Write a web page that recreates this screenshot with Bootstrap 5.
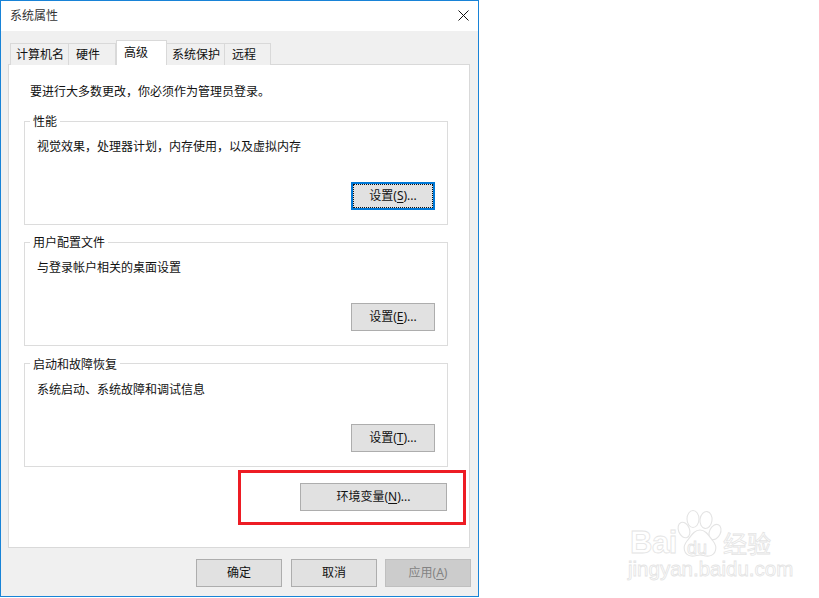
<!DOCTYPE html>
<html lang="zh">
<head>
<meta charset="utf-8">
<title>系统属性</title>
<link rel="stylesheet" href="https://cdn.jsdelivr.net/npm/bootstrap@5.3.0/dist/css/bootstrap.min.css">
<style>
html,body{height:100%;}
body{background:#fff;font:12px/16px "Noto Sans","Noto Sans CJK SC",sans-serif;color:#111;position:relative;overflow:hidden;}
.dlg{width:479px;height:597px;border:1px solid #1883d7;background:#f0f0f0;}
.dlg-title{height:30px;background:#fff;padding:0 9px;color:#333;}
.dlg-close{width:11px;height:11px;display:block;margin-right:0;margin-top:-1px;}
.dlg-body{padding:9px 8px 0 7px;}
.dlg-tabs{padding-left:2px;border:0;height:24px;align-items:flex-end;position:relative;z-index:1;}
.dlg-tabs .nav-link{height:22px;padding:3px 0 0;text-align:left;margin:0 0 -1px;border:1px solid #d9d9d9;border-bottom:0;border-left-width:0;border-radius:0;background:#f0f0f0;color:#111;font-size:12px;line-height:16px;}
.dlg-tabs .nav-item:first-child .nav-link{border-left-width:1px;}
.dlg-tabs .tab-a{width:59px;padding-left:5px;}
.dlg-tabs .tab-b{width:47px;padding-left:7px;}
.dlg-tabs .tab-d{width:58px;padding-left:5px;}
.dlg-tabs .tab-e{width:46px;padding-left:7px;}
.dlg-tabs .nav-link.active{width:51px;height:25px;padding:4px 0 0 7px;background:#fff;color:#111;border-color:#d9d9d9;border-left-width:1px;position:relative;z-index:2;}
.dlg-panel{height:484px;background:#fff;border:1px solid #d9d9d9;padding:18px 21px 0 15px;position:relative;}
.dlg-intro{padding-left:6px;height:29px;margin-top:1px;}
.grp{border:1px solid #dcdcdc;height:112px;margin:0 0 9px;padding:0 12px 14px 12px;display:flex;flex-direction:column;}
.grp legend{float:none;width:auto;font-size:12px;line-height:16px;margin:0 0 0 -7px;padding:0 3px;color:#111;transform:translateY(1px);}
.grp-text{margin-top:10px;flex:1;}
.win-btn{width:84px;height:28px;padding:0;background:#e1e1e1;border:1px solid #adadad;border-radius:0;color:#111;font-size:12px;line-height:16px;}
.win-btn:hover{background:#e1e1e1;border-color:#adadad;color:#111;}
.win-btn u{text-underline-offset:2px;}
.win-btn-focus{border:2px solid #0078d7;outline:1px dotted #111;outline-offset:-3px;}
.win-btn-focus:hover{border-color:#0078d7;}
.grp-last{margin-bottom:0;}
.grp-last legend{transform:translateY(2px);}
.grp-last .grp-text{margin-top:11px;}
.env-row{margin-top:16px;padding-right:1px;}
.env-btn{width:147px;}
.dlg-foot{margin-top:11px;margin-right:-1px;}
.foot-btn{width:86px;}
.foot-gap{margin-right:9px;}
.foot-gap2{margin-right:8px;}
.foot-btn.disabled,.foot-btn:disabled{background:#ccc;border-color:#bfbfbf;color:#838383;opacity:1;}
.red-mark{position:absolute;left:229px;top:405px;width:228px;height:55px;border:3px solid #ed1c24;pointer-events:none;}
.wm{position:absolute;left:628px;top:508px;width:150px;height:76px;color:#fff;}
.wm-bai,.wm-du,.wm-jy,.wm-url{position:absolute;-webkit-text-stroke:.8px #e4e4e4;font-family:"Liberation Sans",sans-serif;white-space:nowrap;}
.wm-bai{left:2px;top:17px;font-size:31px;letter-spacing:-.5px;line-height:36px;font-weight:700;}
.wm-du{left:59px;top:31px;font-size:18px;line-height:18px;z-index:1;}
.wm-jy{left:95px;top:21px;font-size:24px;line-height:28px;font-family:"Noto Sans CJK SC",sans-serif;}
.wm-url{left:0;top:49px;font-size:20.5px;line-height:24px;}
.wm-paw{position:absolute;left:49px;top:1px;}
</style>
</head>
<body>
<div class="dlg d-flex flex-column">
  <div class="dlg-title d-flex align-items-center justify-content-between">
    <span>系统属性</span>
    <svg class="dlg-close" viewBox="0 0 11 11"><path d="M.5.5l10 10M10.500.5l-10 10" stroke="#111" stroke-width="1" fill="none"/></svg>
  </div>
  <div class="dlg-body">
    <ul class="nav nav-tabs dlg-tabs">
      <li class="nav-item"><a class="nav-link tab-a" href="#">计算机名</a></li>
      <li class="nav-item"><a class="nav-link tab-b" href="#">硬件</a></li>
      <li class="nav-item"><a class="nav-link active" href="#">高级</a></li>
      <li class="nav-item"><a class="nav-link tab-d" href="#">系统保护</a></li>
      <li class="nav-item"><a class="nav-link tab-e" href="#">远程</a></li>
    </ul>
    <div class="dlg-panel">
      <div class="dlg-intro">要进行大多数更改，你必须作为管理员登录。</div>
      <fieldset class="grp">
        <legend>性能</legend>
        <div class="grp-text">视觉效果，处理器计划，内存使用，以及虚拟内存</div>
        <div class="d-flex justify-content-end"><button type="button" class="btn win-btn win-btn-focus">设置(<u>S</u>)...</button></div>
      </fieldset>
      <fieldset class="grp">
        <legend>用户配置文件</legend>
        <div class="grp-text">与登录帐户相关的桌面设置</div>
        <div class="d-flex justify-content-end"><button type="button" class="btn win-btn">设置(<u>E</u>)...</button></div>
      </fieldset>
      <fieldset class="grp grp-last">
        <legend>启动和故障恢复</legend>
        <div class="grp-text">系统启动、系统故障和调试信息</div>
        <div class="d-flex justify-content-end"><button type="button" class="btn win-btn">设置(<u>T</u>)...</button></div>
      </fieldset>
      <div class="env-row d-flex justify-content-end"><button type="button" class="btn win-btn env-btn">环境变量(<u>N</u>)...</button></div>
      <div class="red-mark"></div>
    </div>
    <div class="dlg-foot d-flex justify-content-end">
      <button type="button" class="btn win-btn foot-btn foot-gap">确定</button>
      <button type="button" class="btn win-btn foot-btn foot-gap2">取消</button>
      <button type="button" class="btn win-btn foot-btn" disabled>应用(<u>A</u>)</button>
    </div>
  </div>
</div>
<div class="wm">
  <svg class="wm-paw" width="46" height="52" viewBox="0 0 46 52" fill="#fff" stroke="#e4e4e4" stroke-width="1.1">
    <ellipse cx="16" cy="10" rx="6" ry="8.500"/>
    <ellipse cx="29" cy="11" rx="6" ry="8.500" transform="rotate(8 29 11)"/>
    <ellipse cx="7" cy="21" rx="5.500" ry="8" transform="rotate(-22 7 21)"/>
    <ellipse cx="38" cy="23" rx="5.500" ry="8" transform="rotate(25 38 23)"/>
    <path d="M23 21c6 0 9 6 13 11 5 6 3 14-4 15-4 .6-6-1-9-1s-5 1.600-9 1c-7-1-9-9-4-15 4-5 7-11 13-11z"/>
  </svg>
  <span class="wm-bai">Bai</span>
  <span class="wm-du">du</span>
  <span class="wm-jy">经验</span>
  <span class="wm-url">jingyan.baidu.com</span>
</div>
</body>
</html>
